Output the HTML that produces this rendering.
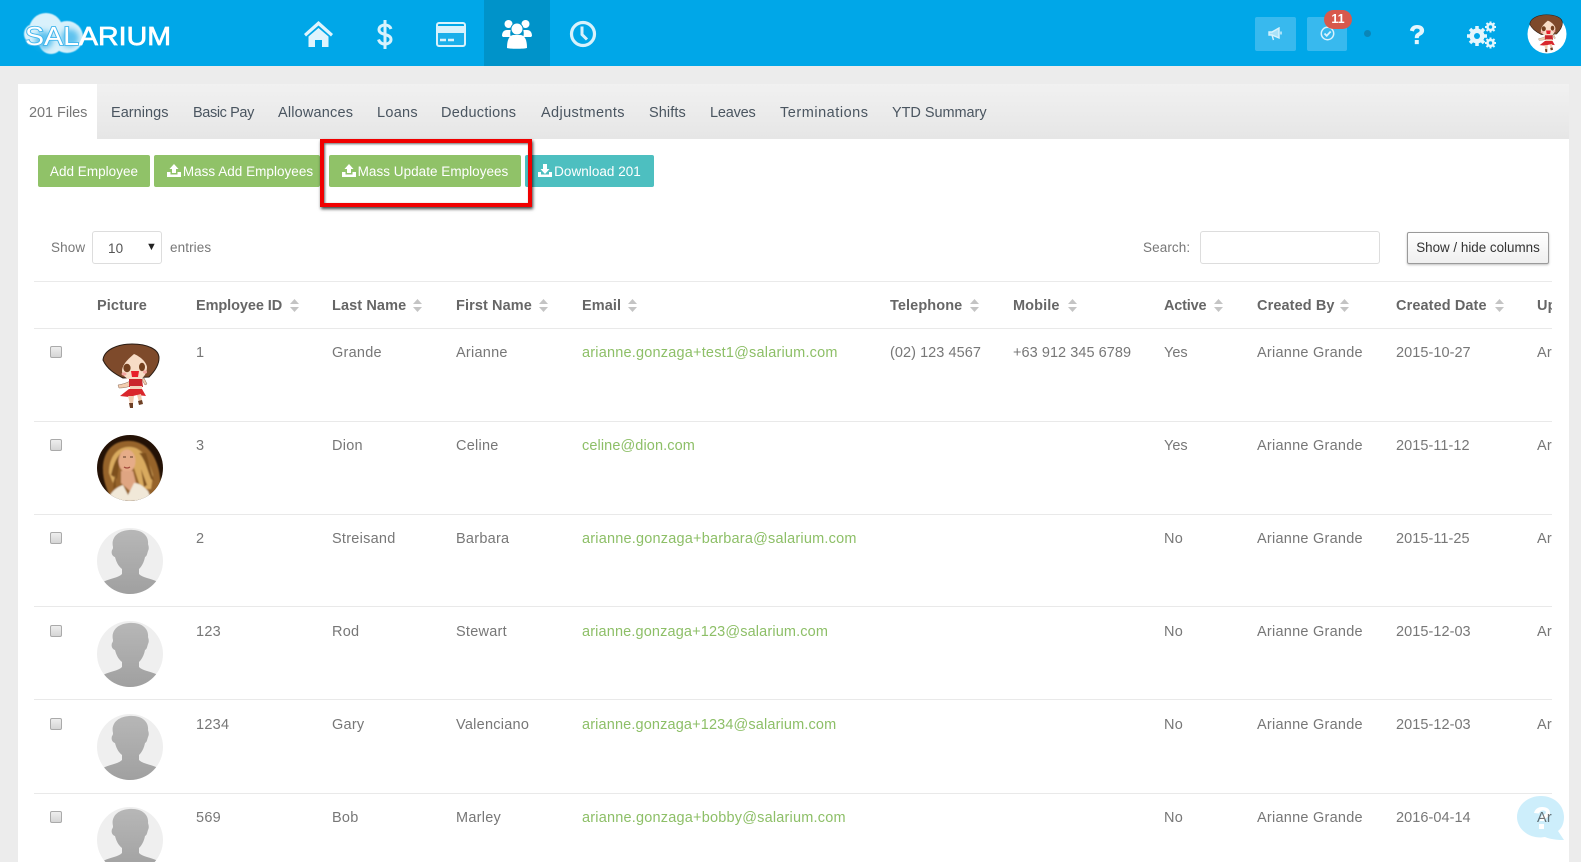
<!DOCTYPE html>
<html><head><meta charset="utf-8"><title>Salarium</title>
<style>
*{box-sizing:border-box}
html,body{margin:0;padding:0;width:1581px;height:862px;overflow:hidden;background:#ececec;font-family:"Liberation Sans",sans-serif;font-size:14.5px;color:#777}
#hdr{position:absolute;left:0;top:0;width:1581px;height:66px;background:#00a7e8}
#act{position:absolute;left:484px;top:0;width:66px;height:66px;background:#0093c9}
.box{position:absolute;top:17px;height:34px;background:#38b9ee;border-radius:2px}
#badge{position:absolute;left:1324px;top:10px;width:28px;height:19px;border-radius:10px;background:#d8594c;color:#fff;font-weight:bold;font-size:12.5px;text-align:center;line-height:19px}
#dot{position:absolute;left:1364px;top:30px;width:7px;height:7px;border-radius:50%;background:#0a86b8}
#panel{position:absolute;left:18px;top:84px;width:1551px;height:778px;background:#fff}
#tabs{position:absolute;left:97px;top:84px;width:1472px;height:55px;background:linear-gradient(#f1f1f1,#e6e6e6)}
.tab{position:absolute;top:105px;line-height:16px;color:#4a5560;white-space:nowrap;letter-spacing:.28px}
.btn{position:absolute;top:155px;height:32px;line-height:33px;color:#fff;background:#90c268;border-radius:2px;text-align:center;white-space:nowrap;letter-spacing:.03px;font-size:13.5px}
.btn svg{vertical-align:-1px;margin-right:2px}
#red{position:absolute;left:320px;top:139px;width:212px;height:68px;border:4px solid #f00000;box-shadow:1px 2px 3px rgba(0,0,0,.75),inset 1px 1px 2px rgba(0,0,0,.6)}
.lbl{position:absolute;top:240px;line-height:16px;letter-spacing:.1px;font-size:13.5px;white-space:nowrap}
.field{position:absolute;top:231px;height:33px;border:1px solid #ddd;border-radius:3px;background:#fff}
#shc{position:absolute;left:1407px;top:232px;width:142px;height:32px;border:1px solid #9a9a9a;border-radius:2px;background:linear-gradient(#fff,#efefef);color:#333;font-size:13.4px;text-align:center;line-height:30px;box-shadow:0 1px 2px rgba(0,0,0,.25)}
#tw{position:absolute;left:34px;top:281px;width:1518px;height:581px;overflow:hidden;border-top:1px solid #eaeaea}
.hl{position:absolute;left:0;width:1518px;height:1px;background:#e9e9e9}
.c{position:absolute;white-space:nowrap;line-height:16px;letter-spacing:.25px;margin-top:3px}
.h{font-weight:bold;color:#666;letter-spacing:.1px;top:14px;margin-top:2px}
.n{letter-spacing:.05px}
.s{position:absolute;top:17px;width:9px;height:13px}
.em{color:#8dbf67;letter-spacing:.2px}
.cb{position:absolute;left:16px;width:12px;height:12px;margin-top:2px;border:1px solid #aaa;border-radius:2px;background:linear-gradient(#eee,#d5d5d5)}
.av{position:absolute;left:63px;width:66px;height:66px;border-radius:50%;overflow:hidden}
#chat{position:absolute;left:1517px;top:796px}
</style></head><body>

<svg width="0" height="0" style="position:absolute">
<defs>
<symbol id="chibi" viewBox="0 0 66 72" overflow="visible">
<path d="M35 39C30 42 26 43 21 44l1 3c5 0 11-1 15-4zM45 38c1 3 2 4 3 6l2-1c-1-2-2-4-3-6z" fill="#f2cdb0" stroke="#8a6a55" stroke-width=".5"/>
<path d="M32 38h13l1 8H32z" fill="#c9272c"/><rect x="33" y="45" width="12" height="4" fill="#f3d4bd"/>
<path d="M32 48h13l4 7-9-1-8 2-9-1z" fill="#d9262c"/>
<path d="M31 55l2 8h3l1-8zM40 54l2 7 3-1-1-7z" fill="#f0cbb0"/>
<path d="M32 62h4v5h-3zM41 60l4-1 1 4-4 1z" fill="#6e4026"/>
<path d="M6 19C7 9 20 3 35 3s27 5 27 14c0 7-5 14-10 19l-26 1C18 33 10 28 6 19z" fill="#7e4a2b" stroke="#2a1c14" stroke-width="1"/>
<path d="M25 30c0-6 6-12 12-17 5 2 12 7 13 13 0 6-3 10-6 12H31c-3-2-6-4-6-8z" fill="#f7dcc6"/>
<ellipse cx="30" cy="27" rx="3.600" ry="4.200" fill="#74401f"/><ellipse cx="45" cy="26" rx="3" ry="4.200" fill="#74401f"/>
<ellipse cx="27" cy="33" rx="2.500" ry="1.600" fill="#f2a5a0"/><ellipse cx="48" cy="31" rx="2" ry="1.600" fill="#f2a5a0"/>
<path d="M34 30h8l-1 6h-6z" fill="#e8202a"/>
</symbol>
<symbol id="ghost" viewBox="0 0 66 66">
<rect width="66" height="66" fill="#efefef"/>
<path d="M6 54c8-4 15-4 19-8v-5c-4-3-6-8-7-12-3-1-4-4-3-7 1-1 1-2 1-3C14 11 19 3 32 2c13-1 20 6 19 14 1 3 1 5 0 7-1 3-1 5-3 6-1 5-3 9-6 12v5c4 4 11 4 19 8v12H6z" fill="url(#gg)"/>
</symbol>
<linearGradient id="gg" x1="0" y1="0" x2="0" y2="1"><stop offset="0" stop-color="#b7b7b7"/><stop offset="1" stop-color="#a0a0a0"/></linearGradient>
<filter id="bl"><feGaussianBlur stdDeviation=".8"/></filter>
<filter id="b3" x="-30%" y="-30%" width="160%" height="160%"><feGaussianBlur stdDeviation="3"/></filter>
<filter id="b1"><feGaussianBlur stdDeviation=".6"/></filter>
<symbol id="sort" viewBox="0 0 9 13"><path d="M4.500 0L9 5H0zM4.500 13L0 8h9z" fill="#c4c4c4"/></symbol>
<symbol id="up" viewBox="0 0 14 13"><path d="M7 0l4.500 5H9v4H5V5H2.500zM0 8h3.500v2.500h7V8H14v5H0z" fill="#fff"/></symbol>
<symbol id="dn" viewBox="0 0 14 13"><path d="M5 0h4v5h2.500L7 10 2.500 5H5zM0 8h3v2.500h8V8h3v5H0z" fill="#fff"/></symbol>
</defs>
</svg>

<div id="hdr"></div>
<div id="act"></div>

<!-- logo -->
<svg style="position:absolute;left:20px;top:10px" width="160" height="50">
<g fill="#fff" opacity=".85" filter="url(#b1)"><circle cx="26" cy="20" r="17"/><circle cx="14" cy="24" r="10"/><circle cx="47" cy="27" r="16"/><circle cx="31" cy="32" r="12"/></g>
<g fill="#35b2ea" opacity=".75" filter="url(#b3)"><circle cx="24" cy="30" r="9"/><circle cx="50" cy="28" r="9"/></g>
<text x="5" y="35" font-family="Liberation Sans,sans-serif" font-size="26" fill="#fff" stroke-width=".7" textLength="146" lengthAdjust="spacingAndGlyphs"><tspan stroke="#43b6ec" stroke-width="1.800" paint-order="stroke">SAL</tspan><tspan stroke="#fff">ARIUM</tspan></text>
</svg>

<!-- nav icons -->
<svg style="position:absolute;left:304px;top:20px" width="30" height="28" fill="#dff4fd"><path d="M14.500 1L0 14l2 2.500L14.500 5.500 27 16.500l2-2.500zM4.500 16.500L14.500 8l10 8.500V27H18v-7h-7v7H4.500z"/></svg>
<svg style="position:absolute;left:376px;top:19px" width="18" height="31" fill="none" stroke="#d8f2fc" stroke-width="3"><path d="M15 10c-1-3-3.500-4-6-4-3.500 0-6 2-6 4.500 0 6.500 12 3.500 12 10 0 2.800-2.700 4.500-6 4.500-3 0-5.500-1.500-6.500-4.500"/><path d="M9 1v29"/></svg>
<svg style="position:absolute;left:436px;top:22px" width="30" height="26" fill="none"><rect x="1" y="1" width="28" height="23" rx="2" stroke="#d8f2fc" stroke-width="2"/><rect x="1" y="4" width="28" height="7" fill="#d8f2fc"/><rect x="1" y="11" width="28" height="12" fill="#d8f2fc" opacity=".12"/><path d="M4 18h6M12 18h6" stroke="#d8f2fc" stroke-width="2.400"/></svg>
<svg style="position:absolute;left:502px;top:19px" width="30" height="30" fill="#fff"><circle cx="6.500" cy="5" r="4"/><circle cx="23.500" cy="5" r="4"/><path d="M0 17c0-4 2-6 5-6h4c-1 2-1 5 0 7H1zM30 17c0-4-2-6-5-6h-4c1 2 1 5 0 7h8z"/><circle cx="15" cy="10" r="6" stroke="#0093c9" stroke-width="1"/><path d="M5 29c0-8 2-12 6-13h8c4 1 6 5 6 13-3 1-17 1-20 0z"/></svg>
<svg style="position:absolute;left:569px;top:20px" width="28" height="28" fill="none" stroke="#d8f2fc"><circle cx="14" cy="14" r="11.500" stroke-width="3.200"/><path d="M13 6.500v8l5 5" stroke-width="3"/></svg>

<div class="box" style="left:1255px;width:41px"></div>
<div class="box" style="left:1307px;width:40px"></div>
<svg style="position:absolute;left:1268px;top:27px" width="15" height="14" fill="none" stroke="#d8f2fc" stroke-width="1.400"><path d="M1 5h3l7-4v10L4 8H1z" fill="#d8f2fc" fill-opacity=".7"/><path d="M4 8l1.500 5M13 4.500v3"/></svg>
<svg style="position:absolute;left:1320px;top:26px" width="15" height="15" fill="none" stroke="#d8f2fc" stroke-width="1.500"><circle cx="7.500" cy="7.500" r="6.200"/><path d="M4.500 7.500l2.200 2.300 4-4.300" stroke-width="1.800"/></svg>
<div id="badge">11</div>
<div id="dot"></div>
<svg style="position:absolute;left:1409px;top:25px" width="16" height="20" viewBox="0 0 18 22" preserveAspectRatio="none" fill="#e4f6fd"><path d="M1 6C2 2 5 0 9 0c5 0 8 2.500 8 6 0 3-2 4.500-4 5.500-1.500.8-2 1.500-2 3H6.500c0-3 .8-4.500 3-5.800C11.200 7.700 12 7.200 12 6c0-1.300-1.200-2-3-2-1.900 0-3 1-3.500 3.200zM6.500 16.500H11V21H6.500z"/></svg>
<svg style="position:absolute;left:1466px;top:21px" width="31" height="28" fill="#e4f6fd">
<g transform="translate(11 15)"><circle r="5.500" fill="none" stroke="#e4f6fd" stroke-width="4"/><g stroke="#e4f6fd" stroke-width="3.500"><path d="M0-10V10M-10 0H10M-7-7L7 7M-7 7L7-7"/></g><circle r="3" fill="#00a7e8"/></g>
<g transform="translate(24.500 6)"><circle r="3" fill="none" stroke="#e4f6fd" stroke-width="2.500"/><g stroke="#e4f6fd" stroke-width="2"><path d="M0-5.500V5.500M-5.500 0H5.500M-4-4L4 4M-4 4L4-4"/></g><circle r="1.700" fill="#00a7e8"/></g>
<g transform="translate(24.500 22)"><circle r="3" fill="none" stroke="#e4f6fd" stroke-width="2.500"/><g stroke="#e4f6fd" stroke-width="2"><path d="M0-5.500V5.500M-5.500 0H5.500M-4-4L4 4M-4 4L4-4"/></g><circle r="1.700" fill="#00a7e8"/></g>
</svg>
<svg style="position:absolute;left:1527px;top:14px" width="40" height="40"><circle cx="20" cy="20" r="19.500" fill="#fff"/><use href="#chibi" x="-1" y="-1" width="39" height="42"/></svg>

<div id="panel"></div>
<div id="tabs"></div>
<div class="tab" style="left:29px;color:#777;letter-spacing:-.05px">201 Files</div>
<div class="tab" style="left:111px;letter-spacing:.03px">Earnings</div>
<div class="tab" style="left:193px;letter-spacing:-.39px">Basic Pay</div>
<div class="tab" style="left:278px;letter-spacing:.18px">Allowances</div>
<div class="tab" style="left:377px">Loans</div>
<div class="tab" style="left:441px">Deductions</div>
<div class="tab" style="left:541px;letter-spacing:.37px">Adjustments</div>
<div class="tab" style="left:649px;letter-spacing:.1px">Shifts</div>
<div class="tab" style="left:710px;letter-spacing:-.2px">Leaves</div>
<div class="tab" style="left:780px;letter-spacing:.53px">Terminations</div>
<div class="tab" style="left:892px;letter-spacing:-.05px">YTD Summary</div>

<div class="btn" style="left:38px;width:112px">Add Employee</div>
<div class="btn" style="left:154px;width:166px;padding-left:6px"><svg width="14" height="13"><use href="#up"/></svg>Mass Add Employees</div>
<div class="btn" style="left:329px;width:192px"><svg width="14" height="13"><use href="#up"/></svg>Mass Update Employees</div>
<div class="btn" style="left:525px;width:129px;background:#4dbfc0"><svg width="14" height="13"><use href="#dn"/></svg>Download 201</div>
<div id="red"></div>

<div class="lbl" style="left:51px">Show</div>
<div class="field" style="left:92px;width:70px"></div>
<div class="lbl" style="left:108px;top:241px;color:#555">10</div>
<div class="lbl" style="left:146px;top:239px;color:#222;font-size:11px">▼</div>
<div class="lbl" style="left:170px">entries</div>
<div class="lbl" style="left:1143px">Search:</div>
<div class="field" style="left:1200px;width:180px"></div>
<div id="shc">Show / hide columns</div>

<div id="tw">
<div class="hl" style="top:46px"></div>
<div class="hl" style="top:139px"></div>
<div class="hl" style="top:232px"></div>
<div class="hl" style="top:324px"></div>
<div class="hl" style="top:417px"></div>
<div class="hl" style="top:511px"></div>

<div class="c h" style="left:63px">Picture</div>
<div class="c h" style="left:162px;letter-spacing:-.08px">Employee ID</div><svg class="s" style="left:256px"><use href="#sort"/></svg>
<div class="c h" style="left:298px">Last Name</div><svg class="s" style="left:379px"><use href="#sort"/></svg>
<div class="c h" style="left:422px">First Name</div><svg class="s" style="left:505px"><use href="#sort"/></svg>
<div class="c h" style="left:548px">Email</div><svg class="s" style="left:594px"><use href="#sort"/></svg>
<div class="c h" style="left:856px">Telephone</div><svg class="s" style="left:936px"><use href="#sort"/></svg>
<div class="c h" style="left:979px">Mobile</div><svg class="s" style="left:1034px"><use href="#sort"/></svg>
<div class="c h" style="left:1130px;letter-spacing:-.2px">Active</div><svg class="s" style="left:1180px"><use href="#sort"/></svg>
<div class="c h" style="left:1223px">Created By</div><svg class="s" style="left:1306px"><use href="#sort"/></svg>
<div class="c h" style="left:1362px">Created Date</div><svg class="s" style="left:1461px"><use href="#sort"/></svg>
<div class="c h" style="left:1503px">Up</div>

<!-- row 1 -->
<div class="cb" style="top:62px"></div>
<svg class="av" style="top:59px;height:72px;border-radius:0;overflow:visible"><use href="#chibi" width="66" height="72"/></svg>
<div class="c" style="left:162px;top:60px">1</div><div class="c" style="left:298px;top:60px">Grande</div><div class="c" style="left:422px;top:60px">Arianne</div>
<div class="c em" style="left:548px;top:60px">arianne.gonzaga+test1@salarium.com</div>
<div class="c n" style="left:856px;top:60px">(02) 123 4567</div><div class="c n" style="left:979px;top:60px">+63 912 345 6789</div>
<div class="c" style="left:1130px;top:60px;letter-spacing:0">Yes</div><div class="c" style="left:1223px;top:60px">Arianne Grande</div><div class="c n" style="left:1362px;top:60px">2015-10-27</div><div class="c" style="left:1503px;top:60px">Ar</div>

<!-- row 2 -->
<div class="cb" style="top:155px"></div>
<svg class="av" style="top:153px" viewBox="0 0 66 66">
<rect width="66" height="66" fill="#241206"/>
<g filter="url(#bl)">
<path d="M6 30C8 12 20 5 34 6c14 1 24 12 28 30 2 10 2 18 0 26l-14 5H16C10 56 5 44 6 30z" fill="#96642a"/>
<path d="M12 38C12 20 22 11 34 12c12 1 18 14 22 28l-2 14H44l-8-24H22l-6 18z" fill="#d9aa5f"/>
<path d="M42 18c6 6 8 16 12 26l3 2-8-28zM14 40c2-8 4-16 10-22l-4 26zM44 34l6 16-3 2zM18 40l-2 14 3-2z" fill="#7d4f1e"/>
<ellipse cx="30" cy="26" rx="8.500" ry="11.500" fill="#e6ac88"/>
<path d="M24 36h12l3 12-6 8-9-8z" fill="#dfa582"/>
<path d="M12 62c3-6 8-10 14-12l5 10 6-12c6 0 10 4 14 8l4 10H12z" fill="#f1e8d8"/>
</g>
<path d="M26 22h3M33 22h3" stroke="#5b3a26" stroke-width="1.100"/>
<path d="M27 32q3 2 6 0" stroke="#a34a3c" stroke-width="1.300" fill="none"/>
</svg>
<div class="c" style="left:162px;top:153px">3</div><div class="c" style="left:298px;top:153px">Dion</div><div class="c" style="left:422px;top:153px">Celine</div>
<div class="c em" style="left:548px;top:153px;letter-spacing:.1px">celine@dion.com</div>
<div class="c" style="left:1130px;top:153px;letter-spacing:0">Yes</div><div class="c" style="left:1223px;top:153px">Arianne Grande</div><div class="c n" style="left:1362px;top:153px">2015-11-12</div><div class="c" style="left:1503px;top:153px">Ar</div>

<!-- row 3 -->
<div class="cb" style="top:248px"></div>
<svg class="av" style="top:246px"><use href="#ghost" width="66" height="66"/></svg>
<div class="c" style="left:162px;top:246px">2</div><div class="c" style="left:298px;top:246px">Streisand</div><div class="c" style="left:422px;top:246px">Barbara</div>
<div class="c em" style="left:548px;top:246px">arianne.gonzaga+barbara@salarium.com</div>
<div class="c" style="left:1130px;top:246px">No</div><div class="c" style="left:1223px;top:246px">Arianne Grande</div><div class="c n" style="left:1362px;top:246px">2015-11-25</div><div class="c" style="left:1503px;top:246px">Ar</div>

<!-- row 4 -->
<div class="cb" style="top:341px"></div>
<svg class="av" style="top:339px"><use href="#ghost" width="66" height="66"/></svg>
<div class="c" style="left:162px;top:339px">123</div><div class="c" style="left:298px;top:339px">Rod</div><div class="c" style="left:422px;top:339px">Stewart</div>
<div class="c em" style="left:548px;top:339px;letter-spacing:.14px">arianne.gonzaga+123@salarium.com</div>
<div class="c" style="left:1130px;top:339px">No</div><div class="c" style="left:1223px;top:339px">Arianne Grande</div><div class="c n" style="left:1362px;top:339px">2015-12-03</div><div class="c" style="left:1503px;top:339px">Ar</div>

<!-- row 5 -->
<div class="cb" style="top:434px"></div>
<svg class="av" style="top:432px"><use href="#ghost" width="66" height="66"/></svg>
<div class="c" style="left:162px;top:432px">1234</div><div class="c" style="left:298px;top:432px">Gary</div><div class="c" style="left:422px;top:432px">Valenciano</div>
<div class="c em" style="left:548px;top:432px;letter-spacing:.14px">arianne.gonzaga+1234@salarium.com</div>
<div class="c" style="left:1130px;top:432px">No</div><div class="c" style="left:1223px;top:432px">Arianne Grande</div><div class="c n" style="left:1362px;top:432px">2015-12-03</div><div class="c" style="left:1503px;top:432px">Ar</div>

<!-- row 6 -->
<div class="cb" style="top:527px"></div>
<svg class="av" style="top:525px"><use href="#ghost" width="66" height="66"/></svg>
<div class="c" style="left:162px;top:525px">569</div><div class="c" style="left:298px;top:525px">Bob</div><div class="c" style="left:422px;top:525px">Marley</div>
<div class="c em" style="left:548px;top:525px">arianne.gonzaga+bobby@salarium.com</div>
<div class="c" style="left:1130px;top:525px">No</div><div class="c" style="left:1223px;top:525px">Arianne Grande</div><div class="c n" style="left:1362px;top:525px">2016-04-14</div><div class="c" style="left:1503px;top:525px">Ar</div>
</div>

<svg id="chat" width="48" height="45" style="mix-blend-mode:multiply"><path d="M24 0C37 0 47 9 47 21c0 6-2 11-6 14l6 9c-8 0-14-1-19-3-2 0-3 .5-4 .5C10 41.500 0 32 0 21 0 9 11 0 24 0z" fill="#cdeefb"/><path d="M17 17c1-4 4-6 8-6 5 0 8 2 8 6 0 3-2 4-4 5-1 1-2 2-2 3h-4c0-3 1-4 3-6 2-1 3-1.500 3-2.500 0-1-1-2-3-2s-3 1-4 3zM22 28h5v5h-5z" fill="#fff"/></svg>
</body></html>
